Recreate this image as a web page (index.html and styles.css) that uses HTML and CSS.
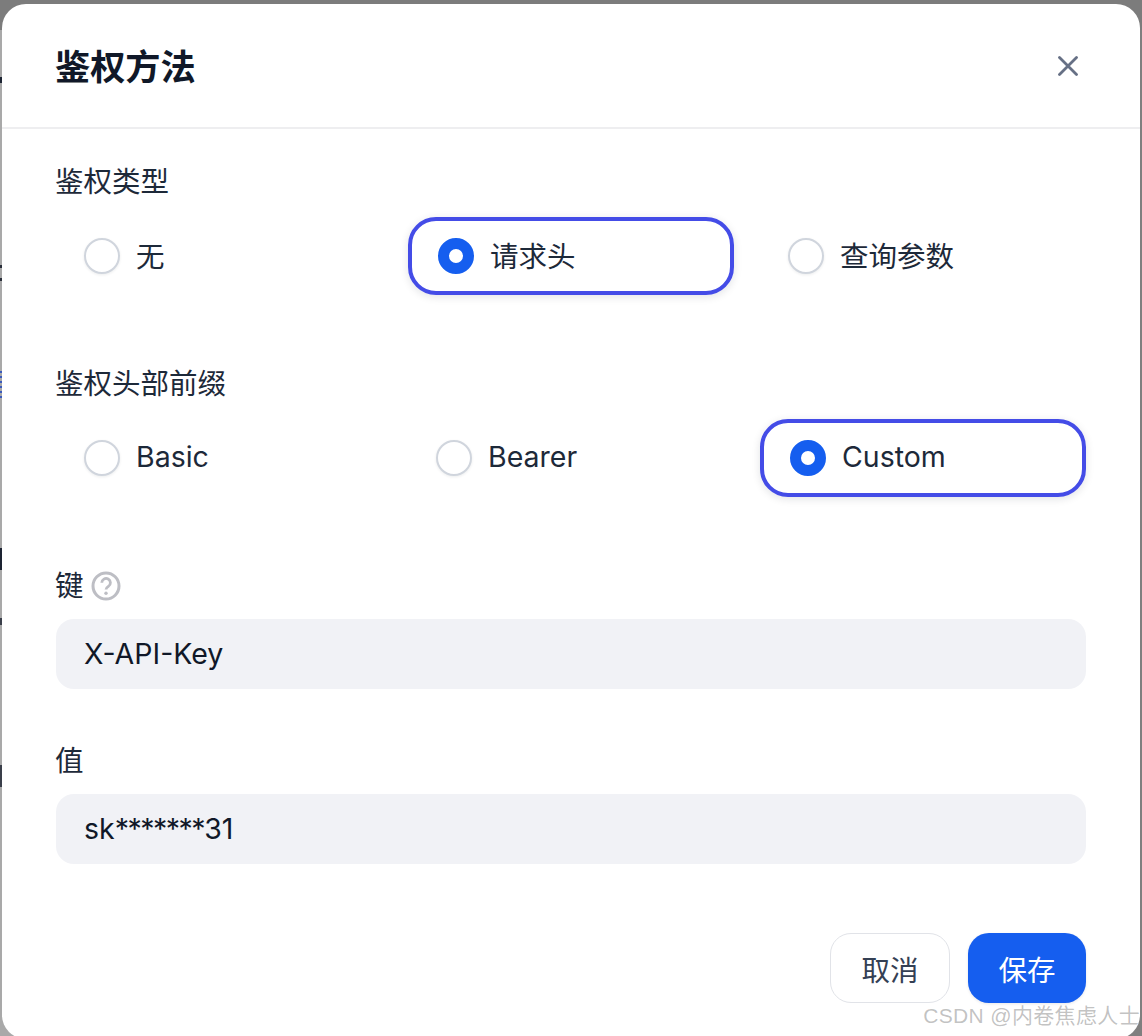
FILE: index.html
```html
<!DOCTYPE html>
<html lang="zh-CN">
<head>
<meta charset="utf-8">
<title>鉴权方法</title>
<link rel="stylesheet" href="styles.css">
</head>
<body>
<div class="modal">
  <header class="modal-head">
    <h1 class="modal-title">鉴权方法</h1>
    <button class="close" type="button" aria-label="关闭">
      <svg viewBox="0 0 20 20" width="20" height="20"><path d="M1.5 1.5 18.5 18.5M18.5 1.5 1.5 18.5" fill="none" stroke="#667085" stroke-width="2.8" stroke-linecap="round"/></svg>
    </button>
  </header>
  <div class="modal-body">
    <section class="field field-radio">
      <div class="label">鉴权类型</div>
      <div class="options">
        <div class="option"><span class="radio"></span><span class="option-text">无</span></div>
        <div class="option selected"><span class="radio"></span><span class="option-text">请求头</span></div>
        <div class="option"><span class="radio"></span><span class="option-text">查询参数</span></div>
      </div>
    </section>
    <section class="field field-radio">
      <div class="label">鉴权头部前缀</div>
      <div class="options">
        <div class="option"><span class="radio"></span><span class="option-text">Basic</span></div>
        <div class="option"><span class="radio"></span><span class="option-text">Bearer</span></div>
        <div class="option selected"><span class="radio"></span><span class="option-text">Custom</span></div>
      </div>
    </section>
    <section class="field field-input">
      <div class="label">键
        <svg class="help" viewBox="0 0 30 30" width="30" height="30"><circle cx="15" cy="15" r="13" fill="none" stroke="#bdbec4" stroke-width="3"/><path d="M10.8 11.8a4.3 4.3 0 1 1 6.6 3.6c-1.5 1-2.4 1.6-2.4 3.1" fill="none" stroke="#bdbec4" stroke-width="2.8"/><circle cx="15" cy="22.2" r="1.7" fill="#bdbec4"/></svg>
      </div>
      <div class="input">X-API-Key</div>
    </section>
    <section class="field field-input">
      <div class="label">值</div>
      <div class="input"><span>sk<span class="mask">*******</span>31</span></div>
    </section>
  </div>
  <footer class="modal-foot">
    <button class="btn btn-cancel" type="button">取消</button>
    <button class="btn btn-save" type="button">保存</button>
  </footer>
</div>
<div class="watermark">CSDN @内卷焦虑人士</div>
</body>
</html>
```
FILE: styles.css
```css
* { box-sizing: border-box; }
html, body { margin: 0; height: 100%; }
body {
  position: relative;
  overflow: hidden;
  height: 1036px;
  padding: 4px 2px 0;
  background:
    linear-gradient(180deg, #7c7c7c 0, #7c7c7c 30px, transparent 30px) no-repeat,
    linear-gradient(90deg, #a9a9a9 0, #a9a9a9 60px, #7f7f7f 60px) no-repeat;
  font-family: Inter, "Noto Sans CJK SC", sans-serif;
  font-size: 28.5px;
  color: #101828;
}
/* fragments of the page behind the dialog, visible in the left edge strip */
body::before {
  content: "";
  position: absolute;
  left: 0;
  top: 0;
  width: 2px;
  height: 800px;
  background:
    linear-gradient(180deg,
      transparent 77px, #1d2433 77px, #1d2433 83px, transparent 83px,
      transparent 265px, #2a2f3a 265px, #2a2f3a 268px, transparent 268px,
      transparent 278px, #2a2f3a 278px, #2a2f3a 281px, transparent 281px,
      transparent 371px, #3b5bbb 371px, #3b5bbb 373px, transparent 373px,
      transparent 376px, #3b5bbb 376px, #3b5bbb 378px, transparent 378px,
      transparent 381px, #3b5bbb 381px, #3b5bbb 383px, transparent 383px,
      transparent 386px, #3b5bbb 386px, #3b5bbb 388px, transparent 388px,
      transparent 391px, #3b5bbb 391px, #3b5bbb 393px, transparent 393px,
      transparent 396px, #3b5bbb 396px, #3b5bbb 398px, transparent 398px,
      transparent 548px, #1d2433 548px, #1d2433 570px, transparent 570px,
      transparent 618px, #3a3f4a 618px, #3a3f4a 625px, transparent 625px,
      transparent 765px, #3a3f4a 765px, #3a3f4a 787px, transparent 787px);
}
.modal {
  position: relative;
  height: 1035px;
  background: #fff;
  border-radius: 24px;
}
.modal-head {
  height: 125px;
  padding: 3px 54px 0;
  display: flex;
  align-items: center;
  justify-content: space-between;
  border-bottom: 2px solid #eeeef0;
}
.modal-title {
  margin: 0 0 0 -1px;
  font-size: 35.2px;
  line-height: 48px;
  font-weight: 700;
  color: #101828;
}
.close {
  width: 28px;
  height: 28px;
  margin: -3px 4px 0 0;
  padding: 0;
  border: 0;
  background: none;
  display: flex;
  align-items: center;
  justify-content: center;
}
.modal-body {
  padding: 33px 54px 0;
  display: flex;
  flex-direction: column;
}
.field-radio { height: 202px; }
.field-input { height: 175px; }
.label {
  margin-left: -1px;
  display: flex;
  align-items: center;
  gap: 7px;
  height: 40px;
  line-height: 40px;
  color: #1d2939;
}
.field-input .label { margin-bottom: 13px; }
.options {
  margin-top: 15px;
  display: grid;
  grid-template-columns: repeat(3, 1fr);
  gap: 26px;
}
.option {
  height: 78px;
  padding: 0 26px;
  display: flex;
  align-items: center;
  gap: 16px;
  border: 2px solid transparent;
  border-radius: 28px;
  color: #1d2939;
}
.option-text { padding-bottom: 3px; }
.option.selected {
  border: 4px solid #444ce7;
  box-shadow: 0 2px 8px rgba(16, 24, 40, 0.12);
}
.radio {
  flex: none;
  width: 36px;
  height: 36px;
  border-radius: 50%;
  border: 2px solid #d0d5dd;
  background: #fff;
  box-shadow: 0 1px 3px rgba(16, 24, 40, 0.08);
}
.selected .radio {
  border: 11px solid #155eef;
  box-shadow: none;
}
.input {
  height: 70px;
  padding: 0 28px 2px;
  display: flex;
  align-items: center;
  background: #f1f2f6;
  border-radius: 18px;
  color: #101828;
}
.mask { letter-spacing: -1.5px; }
.modal-foot {
  margin-top: 17px;
  padding: 0 54px;
  display: flex;
  justify-content: flex-end;
  gap: 18px;
}
.btn {
  height: 70px;
  border-radius: 21px;
  font: inherit;
}
.btn-cancel {
  width: 120px;
  background: #fff;
  border: 1.5px solid #e1e3e8;
  color: #344054;
}
.btn-save {
  width: 118px;
  background: #155eef;
  border: 0;
  color: #fff;
  box-shadow: 0 1px 3px rgba(16, 24, 40, 0.1);
}
.watermark {
  position: absolute;
  right: 2px;
  top: 1002px;
  font-family: "Liberation Sans", "Noto Sans CJK SC", sans-serif;
  font-size: 21px;
  line-height: 28px;
  color: rgba(120, 120, 120, 0.45);
  letter-spacing: 0.35px;
  white-space: nowrap;
}
```
